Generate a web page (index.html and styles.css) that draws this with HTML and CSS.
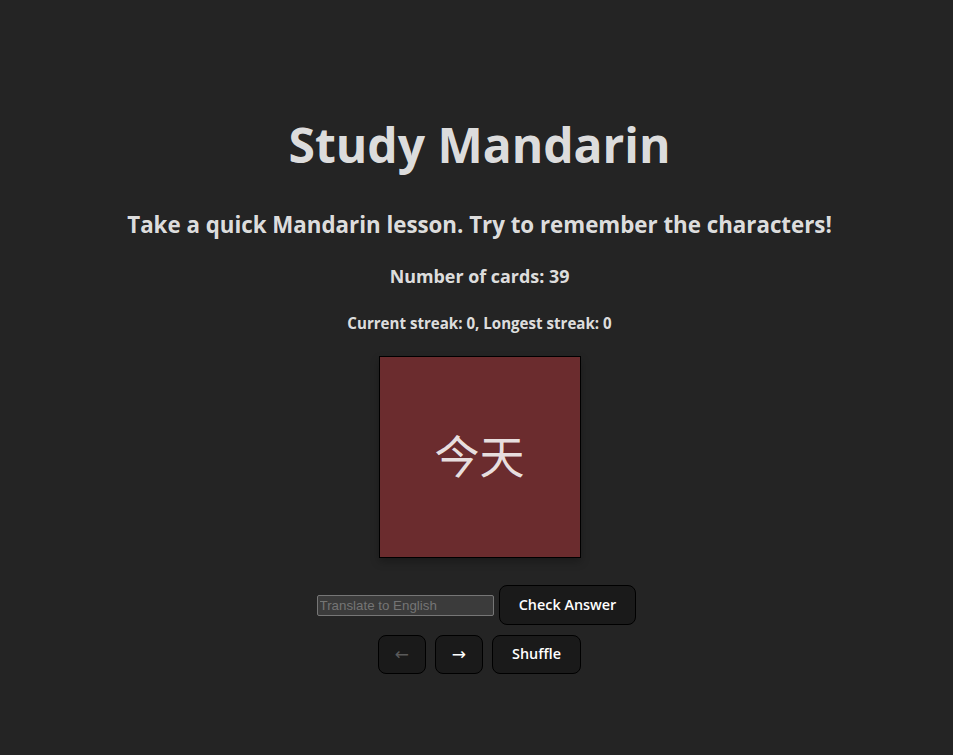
FILE: index.html
```html
<!DOCTYPE html>
<html lang="en">
<head>
<meta charset="UTF-8">
<title>Study Mandarin</title>
<link rel="stylesheet" href="styles.css">
</head>
<body>
<div class="root">
  <h1 class="title">Study Mandarin</h1>
  <h2 class="subtitle">Take a quick Mandarin lesson. Try to remember the characters!</h2>
  <h3 class="count">Number of cards: 39</h3>
  <h4 class="streak">Current streak: 0, Longest streak: 0</h4>
  <div class="card-wrap">
    <div class="card"><span class="hanzi">今天</span></div>
  </div>
  <div class="answer-row">
    <input class="answer-input" type="text" placeholder="Translate to English">
    <button class="btn">Check Answer</button>
  </div>
  <div class="nav-row">
    <button class="btn btn-arrow" disabled>←</button>
    <button class="btn btn-arrow">→</button>
    <button class="btn">Shuffle</button>
  </div>
</div>
</body>
</html>
```
FILE: styles.css
```css
html, body {
  margin: 0;
  padding: 0;
}
body {
  background: #242424;
  color: rgba(255, 255, 255, 0.87);
  font-family: "Open Sans", "Noto Sans", sans-serif;
  line-height: 1.5;
  display: flex;
  place-items: center;
  min-height: 100vh;
  min-width: 320px;
}
.root {
  max-width: 1280px;
  margin: 0 auto;
  padding: 36px 29px 34px 35px;
  text-align: center;
}
.title {
  font-size: 48px;
  line-height: 56px;
  margin: 34px 0;
  font-weight: 700;
}
.subtitle {
  font-size: 22.3px;
  line-height: 36px;
  margin: 20px 0 18px;
  font-weight: 700;
}
.count {
  font-size: 17.9px;
  line-height: 28px;
  margin: 18.7px 0;
  font-weight: 700;
}
.streak {
  font-size: 15.1px;
  line-height: 24px;
  margin: 21.3px 0;
  font-weight: 700;
}
.card-wrap {
  display: flex;
  justify-content: center;
}
.card {
  width: 200px;
  height: 200px;
  background: #6b2c2e;
  border: 1px solid #000;
  box-shadow: 0 4px 8px rgba(0, 0, 0, 0.25);
  display: flex;
  align-items: center;
  justify-content: center;
}
.hanzi {
  font-family: "Noto Sans CJK SC", sans-serif;
  font-size: 45px;
  color: rgba(255, 255, 255, 0.87);
  margin-top: -6px;
}
.answer-row {
  margin-top: 27px;
  display: flex;
  justify-content: center;
  align-items: center;
  gap: 5px;
  padding-right: 6px;
}
.answer-input {
  width: 171px;
  height: 17px;
  padding: 1px 2px;
  background: #3b3b3b;
  border: 1px solid #767676;
  border-radius: 2px;
  color: #ddd;
  font-family: "Liberation Sans", Arial, sans-serif;
  font-size: 13.33px;
}
.answer-input::placeholder {
  color: #757575;
}
.nav-row {
  margin-top: 10px;
  display: flex;
  justify-content: center;
  gap: 9px;
}
.btn {
  border-radius: 8px;
  border: 1px solid #000;
  padding: 9.6px 19.2px;
  font-size: 14.4px;
  font-weight: 600;
  font-family: inherit;
  line-height: 18px;
  background: #1a1a1a;
  color: #fff;
  cursor: pointer;
}
.btn:disabled {
  color: #5a5a5a;
}
.btn-arrow {
  width: 48px;
  padding: 9.6px 0;
  font-size: 17px;
  font-family: "DejaVu Sans", sans-serif;
  font-weight: 400;
}
```
